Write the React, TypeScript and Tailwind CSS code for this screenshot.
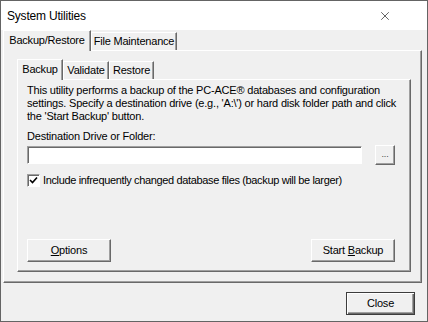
import { X } from 'lucide-react';

const raised =
  'border-t border-l border-t-white border-l-white border-r border-b border-r-[#696969] border-b-[#696969] shadow-[inset_-1px_-1px_0_#a0a0a0]';

const sunken =
  'bg-white border-t border-l border-t-[#a0a0a0] border-l-[#a0a0a0] border-r border-b border-r-white border-b-white shadow-[inset_1px_1px_0_#696969]';

function Tab({ label, active, w }: { label: string; active?: boolean; w: string }) {
  return (
    <div
      className={`${w} ${
        active ? 'h-[21px] relative z-10 -mb-px bg-[#f0f0f0]' : 'h-[18px] mb-0'
      } flex items-center justify-center border-t border-l border-t-white border-l-white border-r border-r-[#696969] shadow-[inset_-1px_0_0_#a0a0a0]`}
    >
      <span className={active ? '-mt-[1px]' : ''}>{label}</span>
    </div>
  );
}

function Button({ children, w, h = 'h-[23px]' }: { children: React.ReactNode; w: string; h?: string }) {
  return (
    <button className={`${w} ${h} ${raised} bg-[#f0f0f0] flex items-center justify-center shrink-0`}>
      {children}
    </button>
  );
}

export default function App() {
  return (
    <div className="w-[428px] h-[322px] border border-[#646464] bg-[#f0f0f0] flex flex-col text-[11px] leading-[13px] tracking-[-0.2px] text-black font-['Liberation_Sans',Arial,sans-serif] overflow-hidden">
      {/* Title bar */}
      <div className="h-[29px] bg-white flex items-center justify-between pl-[6px] pr-[35px] shrink-0">
        <span className="text-[12px] pt-[1px]">System Utilities</span>
        <X size={14} strokeWidth={1.2} className="text-[#222]" />
      </div>

      {/* Outer tabs */}
      <div className="pl-[2px] pr-[5px]">
        <div className="flex items-end h-[20px]">
          <Tab label="Backup/Restore" active w="w-[88px]" />
          <Tab label="File Maintenance" w="w-[86px]" />
        </div>

        {/* Outer panel */}
        <div className={`h-[233px] ${raised} pt-[8px] pl-[13px] pr-[10px] pb-[10px] flex flex-col`}>
          <div className="flex items-end h-[20px]">
            <Tab label="Backup" active w="w-[46px]" />
            <Tab label="Validate" w="w-[46px]" />
            <Tab label="Restore" w="w-[45px]" />
          </div>

          {/* Inner panel */}
          <div className={`flex-1 ${raised} pl-[9px] pr-[15px] pt-[4px] pb-[9px] flex flex-col`}>
            <p className="w-[380px]">
              This utility performs a backup of the PC-ACE® databases and configuration settings. Specify a
              destination drive (e.g., 'A:\') or hard disk folder path and click the 'Start Backup' button.
            </p>
            <div className="mt-[7px]">Destination Drive or Folder:</div>
            <div className="mt-[2px] flex items-center justify-between">
              <div className={`w-[335px] h-[18px] ${sunken}`} />
              <Button w="w-[20px]" h="h-[20px]">
                <span className="text-[9px] leading-none text-[#444] pb-[2px]">...</span>
              </Button>
            </div>
            <div className="mt-[9px] flex items-center gap-[3px]">
              <div className={`w-[13px] h-[13px] ${sunken} flex items-center justify-center`}>
                <svg width="9" height="9" viewBox="0 0 9 9">
                  <path d="M1 4 L3.5 6.5 L8 1.5" fill="none" stroke="#000" strokeWidth="1.6" />
                </svg>
              </div>
              <span className="tracking-[-0.35px]">
                Include infrequently changed database files (backup will be larger)
              </span>
            </div>
            <div className="mt-auto flex justify-between">
              <Button w="w-[84px]">
                <span>
                  <span className="underline">O</span>ptions
                </span>
              </Button>
              <Button w="w-[84px]">
                <span>
                  Start <span className="underline">B</span>ackup
                </span>
              </Button>
            </div>
          </div>
        </div>
      </div>

      {/* Footer */}
      <div className="flex-1 flex justify-end items-start pt-[9px] pr-[12px]">
        <button className="w-[69px] h-[23px] border border-[#3c3c3c] bg-[#f0f0f0] shadow-[inset_1px_1px_0_#fff,inset_-1px_-1px_0_#696969,inset_-2px_-2px_0_#a0a0a0] flex items-center justify-center">
          Close
        </button>
      </div>
    </div>
  );
}
